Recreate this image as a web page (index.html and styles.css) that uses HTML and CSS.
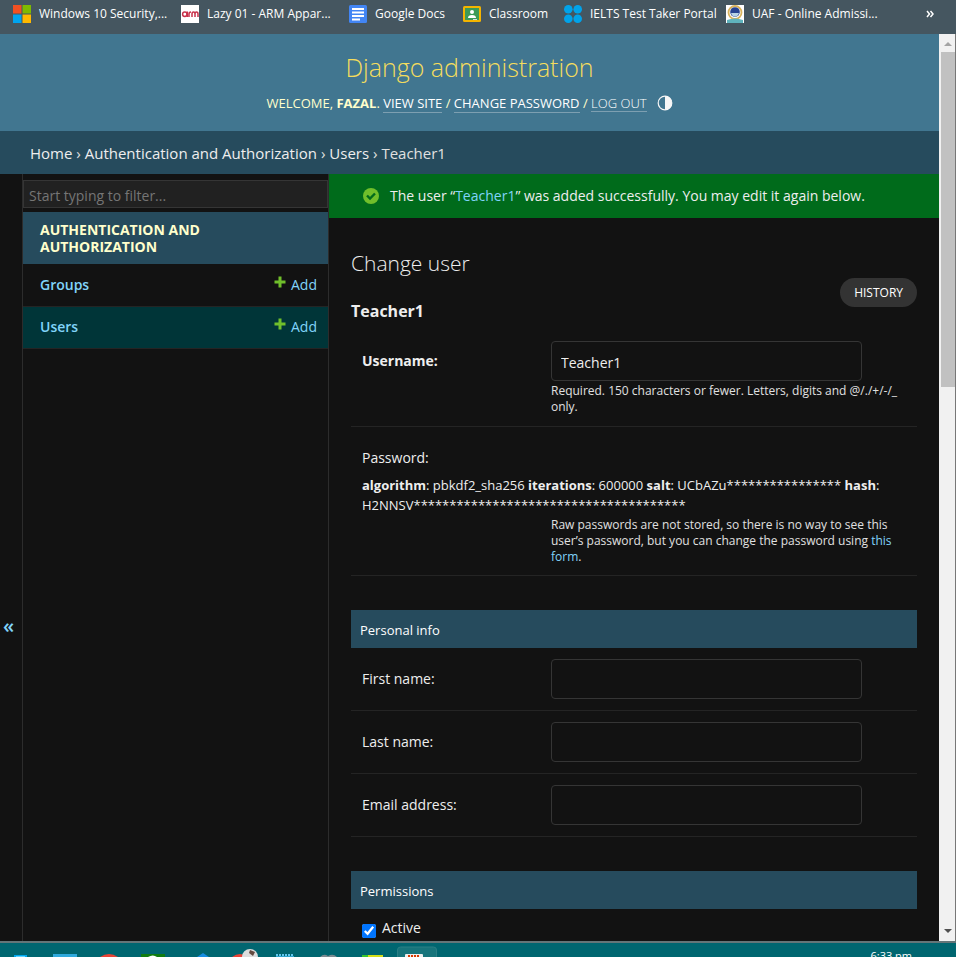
FILE: index.html
```html
<!DOCTYPE html>
<html lang="en">
<head>
<meta charset="utf-8">
<title>Teacher1 | Change user | Django site admin</title>
<link rel="stylesheet" href="styles.css">
</head>
<body>
<nav class="bookmarks" aria-label="Bookmarks">
  <a href="#"><svg width="18" height="18" viewBox="0 0 18 18"><path fill="#f25022" d="M0 0h8.500v8.500H0z"/><path fill="#7fba00" d="M9.500 0H18v8.500H9.500z"/><path fill="#00a4ef" d="M0 9.500h8.500V18H0z"/><path fill="#ffb900" d="M9.500 9.500H18V18H9.500z"/></svg>Windows 10 Security,...</a>
  <a href="#"><svg width="18" height="18" viewBox="0 0 18 18"><path fill="#fff" d="M0 0h18v18H0z"/><g fill="none" stroke="#c8324b" stroke-width="1.500"><circle cx="3.800" cy="9.300" r="2.200"/><path d="M6.300 6.500v5.500M8 12V9q0-2 2-2M11 12V9q0-2 1.500-2T14 9v3M14 9q0-2 1.500-2T17 9v3"/></g></svg>Lazy 01 - ARM Appar...</a>
  <a href="#"><svg width="18" height="18" viewBox="0 0 18 18"><rect width="18" height="18" rx="1.500" fill="#4285f4"/><path stroke="#fff" stroke-width="2" d="M3 4h12M3 7.500h12M3 11h12M3 14.500h8"/></svg>Google Docs</a>
  <a href="#"><svg width="18" height="18" viewBox="0 0 18 18"><rect y="1" width="18" height="16" rx="1.500" fill="#f4b400"/><path fill="#3d9a57" d="M2 3h14v12H2z"/><circle cx="9" cy="7" r="2" fill="#fff"/><path fill="#fff" d="M5 13q0-3 4-3t4 3z"/><path fill="#ddd" d="M10 14h4v1h-4z"/></svg>Classroom</a>
  <a href="#"><svg width="18" height="18" viewBox="0 0 18 18" fill="#00a3ea"><circle cx="4.300" cy="4.300" r="4.300"/><circle cx="13.700" cy="4.300" r="4.300"/><circle cx="4.300" cy="13.700" r="4.300"/><circle cx="13.700" cy="13.700" r="4.300"/></svg>IELTS Test Taker Portal</a>
  <a href="#"><svg width="18" height="18" viewBox="0 0 18 18"><path fill="#fff" d="M0 0h18v18H0z"/><circle cx="9" cy="7.500" r="6.500" fill="none" stroke="#d9b35c" stroke-width="1.800"/><circle cx="9" cy="7" r="4.800" fill="#274391"/><path fill="#b9d4e6" d="M5 8h8q-1 3.500-4 3.500T5 8z"/><path fill="#5fb3bd" d="M1 15q8-3 16 0v3H1z"/></svg>UAF - Online Admissi...</a>
  <button type="button" class="overflow" aria-label="More bookmarks"><svg width="8" height="8" viewBox="0 0 8 8" fill="none" stroke="#fff" stroke-width="1.500"><path d="M1 1l2.500 3L1 7M4.500 1L7 4 4.500 7"/></svg></button>
</nav>

<div class="viewport">
  <div class="page">
    <header class="header">
      <h1 class="site-name">Django administration</h1>
      <div class="user-tools">
        <span>Welcome, <strong>Fazal</strong>. <a href="#">View site</a> / <a href="#">Change password</a> / <button type="button" class="logout">Log out</button></span>
        <button type="button" class="theme" aria-label="Toggle theme"><svg width="16" height="16" viewBox="0 0 16 16"><circle cx="8" cy="8" r="6.800" fill="none" stroke="#f7f7f7" stroke-width="1.200"/><path fill="#f7f7f7" d="M8 1a7 7 0 0 1 0 14z"/></svg></button>
      </div>
    </header>
    <nav class="breadcrumbs" aria-label="Breadcrumbs"><a href="#">Home</a> › <a href="#">Authentication and Authorization</a> › <a href="#">Users</a> › Teacher1</nav>

    <div class="main">
      <button type="button" class="collapse" aria-label="Toggle navigation">«</button>
      <nav class="sidebar" aria-label="Sidebar">
        <input class="filter" type="search" placeholder="Start typing to filter..." aria-label="Filter navigation items">
        <table class="models">
          <caption><a href="#">Authentication and Authorization</a></caption>
          <tbody>
            <tr><th scope="row"><a href="#">Groups</a></th><td><a href="#"><svg width="12" height="14" viewBox="0 0 12 14"><path stroke="#70bf2b" stroke-width="3" d="M6 1.500v11M.5 7h11"/></svg>Add</a></td></tr>
            <tr class="current"><th scope="row"><a href="#">Users</a></th><td><a href="#"><svg width="12" height="14" viewBox="0 0 12 14"><path stroke="#70bf2b" stroke-width="3" d="M6 1.500v11M.5 7h11"/></svg>Add</a></td></tr>
          </tbody>
        </table>
      </nav>

      <main class="content">
        <div class="success"><svg width="16" height="16" viewBox="0 0 16 16"><circle cx="8" cy="8" r="8" fill="#70bf2b"/><path fill="none" stroke="#006b1b" stroke-width="2.400" d="M4 7.500l3 3 5-5"/></svg><p>The user “<a href="#">Teacher1</a>” was added successfully. You may edit it again below.</p></div>
        <form class="form">
          <h2 class="title">Change user</h2>
          <div class="object">
            <h3>Teacher1</h3>
            <a class="history" href="#">History</a>
          </div>
          <div class="row">
            <label class="required" for="username">Username:</label>
            <div class="field">
              <input id="username" type="text" value="Teacher1">
              <p class="help">Required. 150 characters or fewer. Letters, digits and @/./+/-/_ only.</p>
            </div>
          </div>
          <div class="row password">
            <div class="label">Password:</div>
            <p class="hash"><strong>algorithm</strong>: pbkdf2_sha256 <strong>iterations</strong>: 600000 <strong>salt</strong>: UCbAZu**************** <strong>hash</strong>: H2NNSV**************************************</p>
            <p class="help">Raw passwords are not stored, so there is no way to see this user’s password, but you can change the password using <a href="#">this form</a>.</p>
          </div>

          <h2 class="section">Personal info</h2>
          <div class="row"><label for="first">First name:</label><div class="field"><input id="first" type="text"></div></div>
          <div class="row"><label for="last">Last name:</label><div class="field"><input id="last" type="text"></div></div>
          <div class="row"><label for="email">Email address:</label><div class="field"><input id="email" type="email"></div></div>

          <h2 class="section">Permissions</h2>
          <div class="check"><input id="active" type="checkbox" checked><label for="active">Active</label></div>
        </form>
      </main>
    </div>
  </div>
  <div class="scrollbar" aria-hidden="true">
    <svg width="16" height="18" viewBox="0 0 16 18"><path fill="#a3a3a3" d="M9 8l4 4H5z"/></svg>
    <div class="thumb"></div>
    <svg width="16" height="18" viewBox="0 0 16 18"><path fill="#505050" d="M5 6h8l-4 4z"/></svg>
  </div>
</div>

<footer class="taskbar">
  <svg class="apps" width="440" height="14" viewBox="0 0 440 14">
    <path fill="#00a8f0" d="M14 12h13v2H14z"/><path fill="#5fd3ff" d="M16 13h9v1h-9z"/>
    <path fill="#2fa9dc" d="M53 11h24v3H53z"/>
    <path fill="#e94335" d="M100 14q9-6 18 0z"/>
    <path fill="#107c10" d="M141 11h24v3h-24z"/><path fill="#fff" d="M148 14q5-3 9 0z"/>
    <path fill="#168de2" d="M197 14l6-4 6 4z"/>
    <path fill="#e94335" d="M232 14q8-6 16 0z"/><circle cx="250" cy="14" r="8" fill="#ddd"/><path fill="#634a40" d="M250 7l5 2-2 4-4-3z"/>
    <path stroke="#63c7ef" stroke-width="2" stroke-dasharray="2 1" d="M276 12h18"/><path fill="#31a5cf" d="M276 13h18v1h-18z"/>
    <path fill="#7d8b91" d="M320 14q4-4 8-1 5-3 9 1z"/>
    <path fill="#38c52d" d="M362 12h6v2h-6z"/><path fill="#d4df18" d="M368 12h15v2h-15z"/>
    <path fill="#17747b" stroke="#2a7e84" d="M397.500 14V7q0-3 3-3h33q3 0 3 3v7"/><rect x="405" y="11" width="18" height="5" rx="1" fill="#eee"/><path stroke="#d83b01" stroke-width="2" stroke-dasharray="2 1" d="M408 13h11"/>
  </svg>
  <span class="clock">6:33 pm</span>
</footer>
</body>
</html>
```
FILE: styles.css
```css
* { box-sizing: border-box; }
body {
  margin: 0;
  height: 100vh;
  display: flex;
  flex-direction: column;
  overflow: hidden;
  background: #121212;
  color: #eee;
  font: 14px/20px "Open Sans", "Noto Sans", sans-serif;
}
h1, h2, h3, p { margin: 0; font-weight: 400; }
a { color: #81d4fa; text-decoration: none; }
button { padding: 0; border: 0; background: none; color: inherit; font: inherit; }
svg { display: block; flex: none; }

.bookmarks {
  flex: none;
  display: grid;
  grid-template-columns: 168px 168px 114px 101px 162px 1fr 8px;
  height: 34px;
  padding: 5px 22px 0 13px;
  background: #455660;
}
.bookmarks a { display: flex; gap: 8px; color: #fff; font-size: 12px; line-height: 18px; height: 18px; white-space: nowrap; }
.overflow { height: 17px; }

.viewport { flex: 1; min-height: 0; display: flex; border-right: 1px solid #777; }
.page { flex: 1; min-width: 0; display: flex; flex-direction: column; overflow: hidden; }
.header {
  flex: none;
  height: 97px;
  padding: 15px 0 0;
  text-align: center;
  background: #417690;
  color: #ffc;
}
.site-name { font-size: 25px; font-weight: 300; line-height: 36px; color: #f5dd5d; }
.user-tools {
  display: flex;
  justify-content: center;
  align-items: center;
  gap: 10px;
  margin-top: 8px;
  font-size: 13px;
  line-height: 20px;
  text-transform: uppercase;
}
.user-tools a, .logout { color: #fff; border-bottom: 1px solid #7d9fb1; text-transform: uppercase; }
.logout { font-weight: 300; line-height: 15px; }
.breadcrumbs { flex: none; height: 43px; padding: 12px 30px; font-size: 15px; background: #264b5d; color: #e0e0e0; }
.breadcrumbs a { color: #eee; }

.main { flex: 1; min-height: 0; display: flex; }
.collapse { width: 23px; padding: 136px 5px 0 0; border-right: 1px solid #2c2c2c; color: #81d4fa; font-size: 20px; font-weight: 600; }
.sidebar { width: 306px; flex: none; padding-top: 6px; border-right: 1px solid #2c2c2c; }
.filter { display: block; width: 100%; height: 28px; padding: 2px 5px 0; border: 1px solid #353535; border-radius: 0; background: #212121; color: #eee; font: inherit; outline: 0; }
.filter::placeholder { color: #757575; }
.models { width: 100%; margin-top: 4px; border-collapse: collapse; }
.models caption { padding: 9px 60px 9px 17px; background: #264b5d; text-align: left; text-transform: uppercase; font-size: 14px; font-weight: 700; line-height: 17px; }
.models caption a { color: #ffc; }
.models th, .models td { height: 42px; padding: 0; border-bottom: 1px solid #242424; }
.models th { padding-left: 17px; text-align: left; font-weight: 600; }
.models td { padding-right: 11px; }
.models td a { display: flex; justify-content: flex-end; gap: 5px; }
.current { background: #003538; }

.content { flex: 1; min-width: 0; }
.success { display: flex; align-items: center; gap: 11px; height: 44px; padding: 0 34px; background: #006b1b; font-size: 14px; }
.form { padding: 32px 22px 0; }
.title { font-size: 21px; font-weight: 300; line-height: 26px; }
.object { display: flex; justify-content: space-between; align-items: flex-start; margin-top: 2px; height: 52px; }
.object h3 { padding-top: 20px; font-size: 16px; font-weight: 700; line-height: 26px; }
.history { padding: 5px 14px; border-radius: 15px; background: #333; color: #fff; font-size: 12px; line-height: 19px; text-transform: uppercase; }
.row { display: flex; padding: 11px; border-bottom: 1px solid #242424; }
.row label { width: 189px; flex: none; padding-top: 10px; }
.required { font-weight: 700; }
.field { width: 350px; }
.field input { display: block; width: 311px; height: 40px; padding: 3px 9px 0; border: 1px solid #353535; border-radius: 4px; background: #121212; color: #eee; font: inherit; }
.help { padding-top: 2px; font-size: 12px; line-height: 16px; color: #e0e0e0; }
.password { display: block; padding-top: 21px; padding-bottom: 10px; }
.hash { margin-top: 7px; font-size: 13px; }
.password .help { width: 350px; margin-left: 189px; }
.section { margin-top: 34px; padding: 10px 9px 8px; background: #264b5d; color: #fff; font-size: 13px; }
.check { display: flex; gap: 6px; padding: 9px 11px; }
.check input { width: 14px; height: 14px; margin: 6px 0 0; accent-color: #0075ff; }

.scrollbar { width: 16px; display: flex; flex-direction: column; background: #f1f1f1; }
.thumb { flex: none; width: 14px; height: 335px; margin: 0 0 auto 2px; background: #c1c1c1; }
.taskbar { flex: none; display: flex; justify-content: space-between; height: 16px; overflow: hidden; border-top: 2px solid #647578; background: #006670; }
.clock { padding: 5px 44px 0 0; font-size: 11px; line-height: 16px; color: #fff; }
```
